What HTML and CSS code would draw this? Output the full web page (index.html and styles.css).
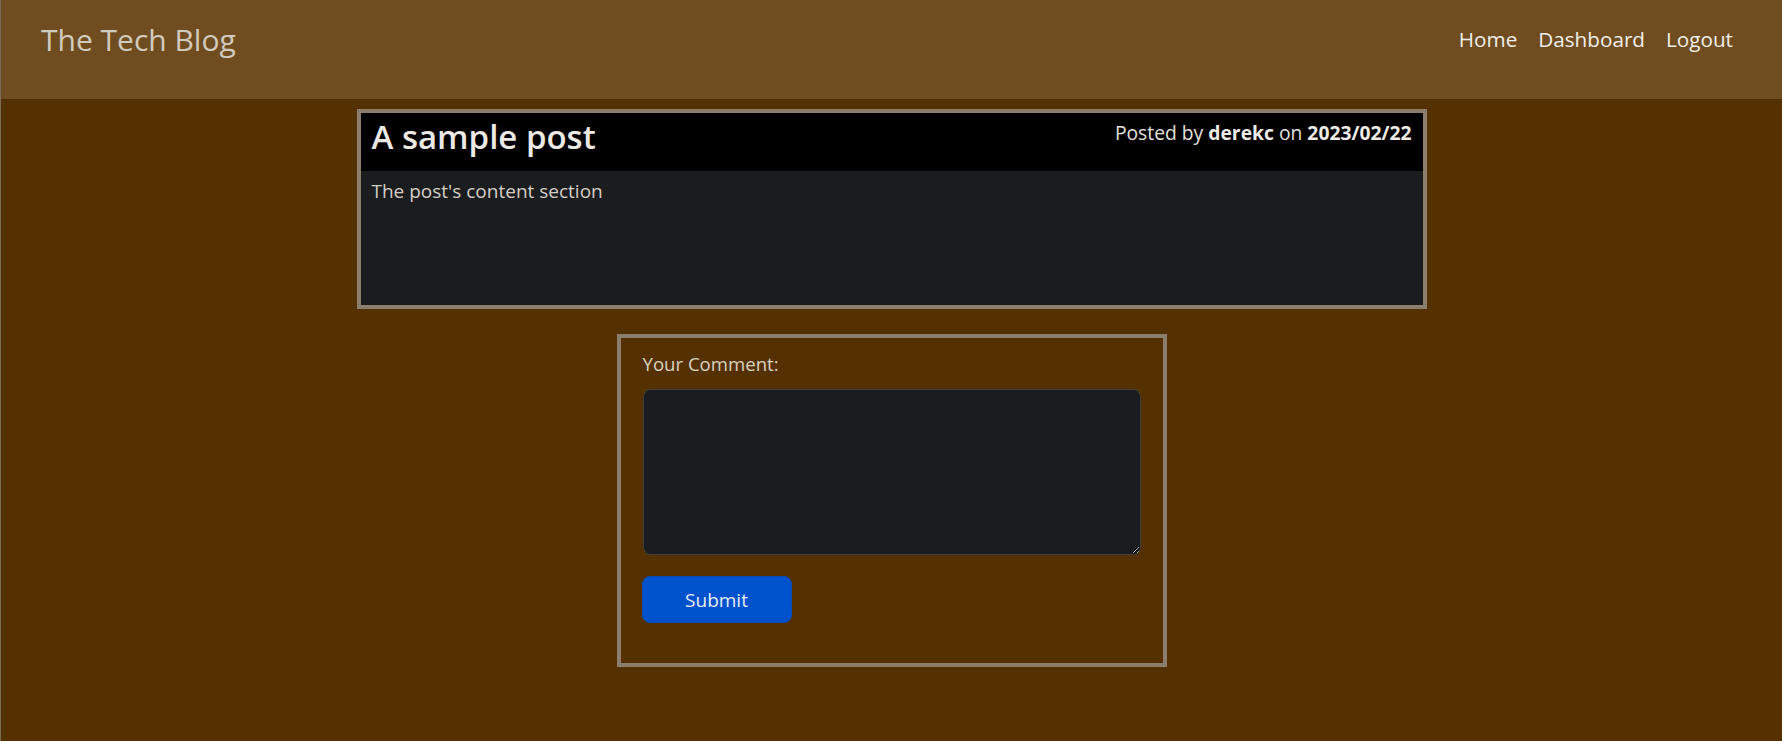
FILE: index.html
```html
<!DOCTYPE html>
<html lang="en">
<head>
<meta charset="utf-8">
<title>The Tech Blog</title>
<link rel="stylesheet" href="styles.css">
</head>
<body>
<div class="page">
  <header class="topbar">
    <a class="brand" href="#">The Tech Blog</a>
    <nav class="nav">
      <a class="nav-link" href="#">Home</a>
      <a class="nav-link" href="#">Dashboard</a>
      <a class="nav-link" href="#">Logout</a>
    </nav>
  </header>
  <main class="main">
    <article class="post">
      <div class="post-head">
        <h2 class="post-title">A sample post</h2>
        <p class="post-meta">Posted by <strong>derekc</strong> on <strong>2023/02/22</strong></p>
      </div>
      <div class="post-body">
        <p class="post-text">The post's content section</p>
      </div>
    </article>
    <form class="comment">
      <label class="comment-label" for="comment">Your Comment:</label>
      <textarea class="comment-input" id="comment"></textarea>
      <button class="btn-submit" type="button">Submit</button>
    </form>
  </main>
</div>
</body>
</html>
```
FILE: styles.css
```css
* { box-sizing: border-box; }
html, body { margin: 0; padding: 0; }
body {
  background: #553000;
  font-family: "Open Sans", "Noto Sans", sans-serif;
  color: #e6e2dc;
}
.page {
  min-height: 741px;
  border-left: 1px solid #7d6a52;
}
.topbar {
  height: 99px;
  background: #704d20;
  display: flex;
  justify-content: space-between;
  align-items: flex-start;
  padding: 0 49px 0 40px;
}
.brand {
  color: #d2cabd;
  text-decoration: none;
  font-size: 30px;
  line-height: 40px;
  padding-top: 20px;
}
.nav {
  display: flex;
  gap: 21px;
  padding-top: 24px;
}
.nav-link {
  color: #f1ede8;
  text-decoration: none;
  font-size: 20.7px;
  line-height: 30px;
}
.main {
  padding-top: 10px;
}
.post {
  width: 1070px;
  margin: 0 auto;
  border: 4px solid #8b7e6c;
}
.post-head {
  height: 58px;
  background: #000;
  display: flex;
  justify-content: space-between;
  align-items: flex-start;
  padding: 6px 11px 0 11px;
}
.post-title {
  margin: 0;
  font-size: 33px;
  line-height: 36px;
  font-weight: 600;
  color: #ece9e4;
}
.post-meta {
  margin: 0;
  font-size: 19.3px;
  line-height: 28px;
  color: #e4e1dc;
}
.post-meta strong { font-weight: 700; color: #eeebe6; }
.post-body {
  height: 134px;
  background: #1b1c1e;
  padding: 5px 11px 0 11px;
}
.post-text {
  margin: 0;
  font-size: 19px;
  line-height: 30px;
  color: #d3cec6;
}
.comment {
  width: 550px;
  margin: 25px auto 0;
  border: 4px solid #8b7e6c;
  padding: 11px 22px 40px 22px;
  display: flex;
  flex-direction: column;
  align-items: flex-start;
}
.comment-label {
  font-size: 18.6px;
  line-height: 30px;
  color: #d8d0c4;
}
.comment-input {
  margin-top: 10px;
  width: 100%;
  height: 166px;
  background: #1b1c1f;
  border: 1px solid #3d3e40;
  border-radius: 8px;
  color: #e6e2dc;
  font-family: inherit;
  font-size: 18px;
}
.btn-submit {
  margin-top: 21px;
  margin-left: -1px;
  width: 150px;
  height: 47px;
  background: #0052cc;
  border: 1px solid #0a4cb3;
  border-radius: 8px;
  color: #e8ebf2;
  font-family: inherit;
  font-size: 19px;
  cursor: pointer;
}
```
